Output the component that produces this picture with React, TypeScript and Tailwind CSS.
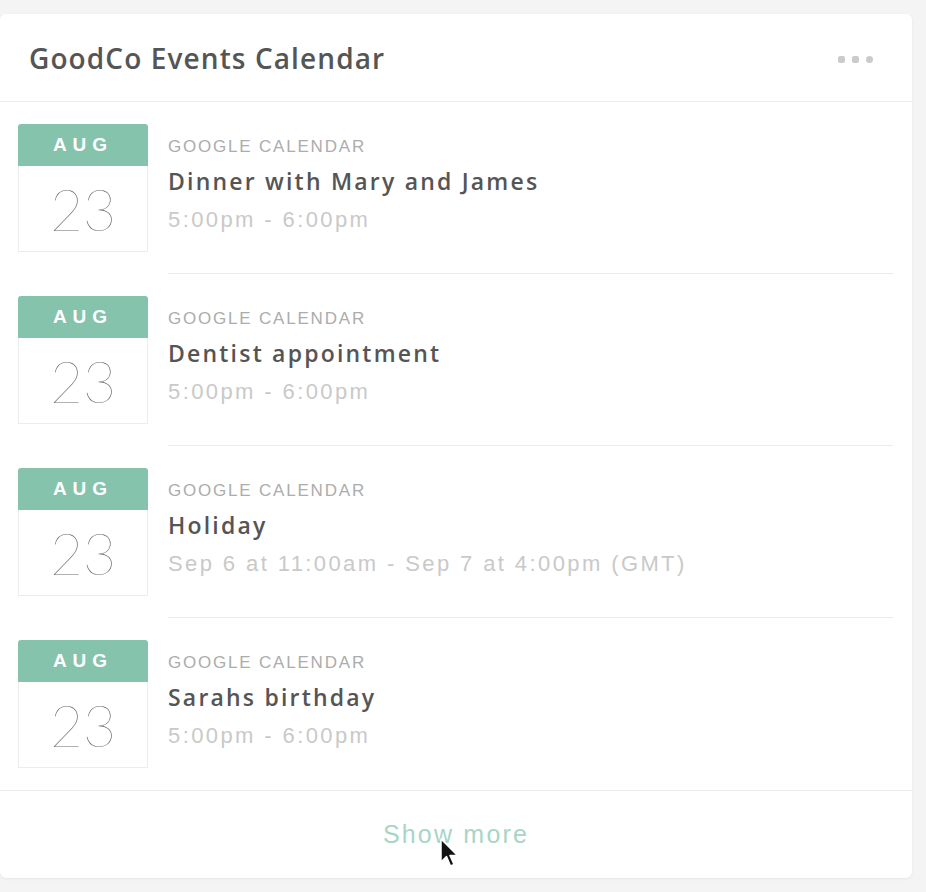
type CalEvent = {
  month: string;
  day: string;
  source: string;
  title: string;
  time: string;
};

const events: CalEvent[] = [
  { month: "AUG", day: "23", source: "Google Calendar", title: "Dinner with Mary and James", time: "5:00pm - 6:00pm" },
  { month: "AUG", day: "23", source: "Google Calendar", title: "Dentist appointment", time: "5:00pm - 6:00pm" },
  { month: "AUG", day: "23", source: "Google Calendar", title: "Holiday", time: "Sep 6 at 11:00am - Sep 7 at 4:00pm (GMT)" },
  { month: "AUG", day: "23", source: "Google Calendar", title: "Sarahs birthday", time: "5:00pm - 6:00pm" },
];

const DateBadge = ({ month, day }: { month: string; day: string }) => (
  <div className="w-[130px] shrink-0">
    <div className="h-[42px] bg-[#85c3ad] rounded-t-[3px] flex items-center justify-center text-white font-bold text-[19px] tracking-[6px]">
      {month}
    </div>
    <div className="h-[86px] border border-t-0 border-[#ececec] flex items-center justify-center text-[#6a6a6a] text-[57px] leading-none font-thin font-['Lato',sans-serif] pt-[2px]">
      {day}
    </div>
  </div>
);

const EventRow = ({ ev, last }: { ev: CalEvent; last: boolean }) => (
  <div className="flex gap-[20px]">
    <DateBadge month={ev.month} day={ev.day} />
    <div className={`flex-1 ${last ? "h-[128px]" : "h-[150px] border-b border-[#ececec]"}`}>
      <div className="mt-[13px] text-[17px] leading-[20px] uppercase text-[#acacac] tracking-[1.8px]">
        {ev.source}
      </div>
      <div className="mt-[9px] text-[23px] leading-[30px] font-semibold font-['Open_Sans',sans-serif] text-[#555555] tracking-[2.2px]">
        {ev.title}
      </div>
      <div className="mt-[9px] text-[22px] leading-[30px] text-[#c9c9c9] tracking-[2.4px]">
        {ev.time}
      </div>
    </div>
  </div>
);

const Cursor = () => (
  <svg className="absolute left-[440px] top-[838px]" width="20" height="32" viewBox="0 0 20 32">
    <path d="M1 1 L1 24 L6.5 18.5 L10.5 28 L14 26.5 L10 17.5 L17.5 17.5 Z" fill="#111" stroke="#fff" strokeWidth="1.5" strokeLinejoin="round" />
  </svg>
);

export default function App() {
  return (
    <div className="relative w-[926px] h-[892px] bg-[#f4f4f4] pt-[14px] font-['Liberation_Sans',Arial,sans-serif]">
      <div className="w-[912px] bg-white rounded-[6px] shadow-[0_1px_3px_rgba(0,0,0,0.06)]">
        <div className="h-[88px] flex items-center justify-between pl-[29px] pr-[39px] border-b border-[#ececec]">
          <div className="text-[28px] font-semibold font-['Open_Sans',sans-serif] text-[#555555] tracking-[1.1px]">
            GoodCo Events Calendar
          </div>
          <div className="flex gap-[7px] mt-[4px]">
            <span className="w-[7px] h-[7px] rounded-[2px] bg-[#cbcbcb]" />
            <span className="w-[7px] h-[7px] rounded-[2px] bg-[#cbcbcb]" />
            <span className="w-[7px] h-[7px] rounded-full bg-[#cbcbcb]" />
          </div>
        </div>
        <div className="pt-[22px] pb-[22px] pl-[18px] pr-[19px] flex flex-col gap-[22px]">
          {events.map((ev, i) => (
            <EventRow key={i} ev={ev} last={i === events.length - 1} />
          ))}
        </div>
        <div className="h-[88px] border-t border-[#ececec] flex items-center justify-center">
          <span className="text-[25px] text-[#a8d5c6] tracking-[2.2px]">Show more</span>
        </div>
      </div>
      <Cursor />
    </div>
  );
}
